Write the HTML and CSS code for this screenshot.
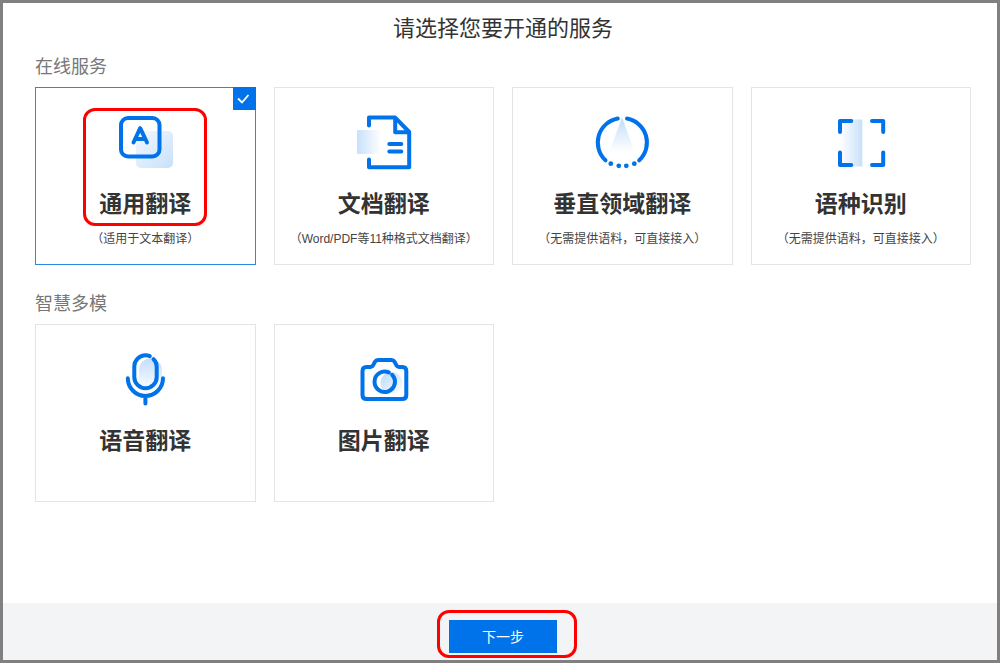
FILE: index.html
```html
<!DOCTYPE html>
<html lang="zh-CN">
<head>
<meta charset="utf-8">
<meta name="viewport" content="width=device-width, initial-scale=1">
<title>请选择您要开通的服务</title>
<link rel="stylesheet" href="styles.css">
</head>
<body>
<form class="page">
  <main class="content">
    <h1 class="page-title">请选择您要开通的服务</h1>

    <section class="group">
      <h2 class="group-title">在线服务</h2>
      <div class="cards">
        <label class="card card-selected">
          <input class="card-check" type="checkbox" name="service" value="text" checked>
          <svg class="tick" viewBox="0 0 23 22" aria-hidden="true"><path d="M6 10.500l4 4 6.500-7.500"/></svg>
          <span class="card-main marked">
            <svg class="icon" viewBox="0 0 60 60" aria-hidden="true">
              <defs><linearGradient id="g1" x1="0" y1="0" x2="1" y2="1"><stop offset="0" stop-color="#f4f9ff"/><stop offset="1" stop-color="#c8e0fb"/></linearGradient></defs>
              <rect x="21" y="18" width="37" height="37" rx="5" fill="url(#g1)"/>
              <rect class="line" x="6" y="5" width="38.500" height="38.500" rx="7"/>
              <path class="line" d="M18.500 29.500L25.200 15.200L32 29.500M21 26H29.500"/>
            </svg>
            <span class="card-title">通用翻译</span>
          </span>
          <span class="card-note">（适用于文本翻译）</span>
        </label>

        <label class="card">
          <input class="card-check" type="checkbox" name="service" value="document">
          <svg class="tick" viewBox="0 0 23 22" aria-hidden="true"><path d="M6 10.500l4 4 6.500-7.500"/></svg>
          <span class="card-main">
            <svg class="icon" viewBox="0 0 60 60" aria-hidden="true">
              <defs><linearGradient id="g2"><stop offset="0" stop-color="#c8e0fb"/><stop offset="1" stop-color="#fff"/></linearGradient></defs>
              <rect x="3" y="17" width="24" height="24" rx="1" fill="url(#g2)"/>
              <path class="line" d="M15 12.500V4.600H41.200L55.200 19V54.200H15V46.500M41.200 5V19.200H55M35.300 31H47.300M35.300 38.500H47.300"/>
            </svg>
            <span class="card-title">文档翻译</span>
          </span>
          <span class="card-note">（Word/PDF等11种格式文档翻译）</span>
        </label>

        <label class="card">
          <input class="card-check" type="checkbox" name="service" value="domain">
          <svg class="tick" viewBox="0 0 23 22" aria-hidden="true"><path d="M6 10.500l4 4 6.500-7.500"/></svg>
          <span class="card-main">
            <svg class="icon" viewBox="0 0 60 60" aria-hidden="true">
              <defs><linearGradient id="g3" x1="0" y1="0" x2="0" y2="1"><stop offset="0" stop-color="#c0dcfb"/><stop offset="1" stop-color="#fff"/></linearGradient></defs>
              <path d="M30 4L42.500 39H17.500Z" fill="url(#g3)"/>
              <path class="line" d="M25.800 5.500A24.400 24.400 0 0 0 13.500 47.300M35 5.500A24.400 24.400 0 0 1 47.200 47.300"/>
              <g fill="#0073eb"><circle cx="18.800" cy="50.700" r="2.400"/><circle cx="26.800" cy="52.800" r="2.400"/><circle cx="34.300" cy="52.800" r="2.400"/><circle cx="42.300" cy="50.700" r="2.400"/></g>
            </svg>
            <span class="card-title">垂直领域翻译</span>
          </span>
          <span class="card-note">（无需提供语料，可直接接入）</span>
        </label>

        <label class="card">
          <input class="card-check" type="checkbox" name="service" value="detect">
          <svg class="tick" viewBox="0 0 23 22" aria-hidden="true"><path d="M6 10.500l4 4 6.500-7.500"/></svg>
          <span class="card-main">
            <svg class="icon" viewBox="0 0 60 60" aria-hidden="true">
              <defs><linearGradient id="g4"><stop offset="0" stop-color="#fff"/><stop offset="1" stop-color="#c8e0fb"/></linearGradient></defs>
              <rect x="9" y="6.500" width="22.300" height="47" fill="url(#g4)"/>
              <path class="line" d="M9 19V8H20.300M41 8H52.200V19M52.200 39.500V51.900H41M20.300 51.900H9V39.500"/>
            </svg>
            <span class="card-title">语种识别</span>
          </span>
          <span class="card-note">（无需提供语料，可直接接入）</span>
        </label>
      </div>
    </section>

    <section class="group">
      <h2 class="group-title">智慧多模</h2>
      <div class="cards">
        <label class="card">
          <input class="card-check" type="checkbox" name="service" value="speech">
          <svg class="tick" viewBox="0 0 23 22" aria-hidden="true"><path d="M6 10.500l4 4 6.500-7.500"/></svg>
          <span class="card-main">
            <svg class="icon" viewBox="0 0 60 60" aria-hidden="true">
              <defs><linearGradient id="g5" x1="0" y1="0" x2="0" y2="1"><stop offset="0" stop-color="#c3ddfb"/><stop offset="1" stop-color="#fff"/></linearGradient></defs>
              <rect x="24" y="8.500" width="23" height="32" rx="11.500" fill="url(#g5)"/>
              <path class="line" d="M34.800 6.100Q33 5.300 30.500 5.300A11.200 11.200 0 0 0 19.300 16.500V27A11.200 11.200 0 0 0 41.700 27V16.500Q41.700 12.500 38.500 9.200M12.800 28.300A17.600 17.600 0 0 0 48 28.300M30.400 46V53.600"/>
            </svg>
            <span class="card-title">语音翻译</span>
          </span>
        </label>

        <label class="card">
          <input class="card-check" type="checkbox" name="service" value="image">
          <svg class="tick" viewBox="0 0 23 22" aria-hidden="true"><path d="M6 10.500l4 4 6.500-7.500"/></svg>
          <span class="card-main">
            <svg class="icon" viewBox="0 0 60 60" aria-hidden="true">
              <defs><linearGradient id="g6" x1="0" y1="0" x2="1" y2="1"><stop offset="0" stop-color="#b8d8fa"/><stop offset="1" stop-color="#fff"/></linearGradient></defs>
              <circle cx="37.500" cy="33" r="11" fill="url(#g6)"/>
              <path class="line" d="M12.500 17H16.500Q18.300 17 19.200 15.200L21 11.700Q22 9.900 24 9.900H37.500Q39.500 9.900 40.500 11.700L42.300 15.200Q43.200 17 45 17H48.300Q52.300 17 52.300 21V44.900Q52.300 48.900 48.300 48.900H12.500Q8.500 48.900 8.500 44.900V21Q8.500 17 12.500 17Z"/>
              <path class="line" d="M34.800 22.400A10.200 10.200 0 1 0 38.200 24.800"/>
            </svg>
            <span class="card-title">图片翻译</span>
          </span>
        </label>
      </div>
    </section>
  </main>

  <footer class="footer">
    <span class="marked next-wrap"><button class="next" type="button">下一步</button></span>
  </footer>
</form>
</body>
</html>
```
FILE: styles.css
```css
* {
  box-sizing: border-box;
}

body {
  margin: 0;
  font-family: "Liberation Sans", "Noto Sans CJK SC", sans-serif;
  font-weight: 400;
  color: #333;
  background: #fff;
}

.page {
  display: flex;
  flex-direction: column;
  min-height: 100vh;
  border: 3px solid #808080;
}

.content {
  flex: 1;
  padding: 10px 26px 20px 32px;
}

.page-title {
  margin: 0 0 10px;
  font-size: 22px;
  line-height: 32px;
  font-weight: 400;
  text-align: center;
}

.group + .group {
  margin-top: 27px;
}

.group-title {
  margin: 0 0 8px;
  font-size: 18px;
  line-height: 24px;
  font-weight: 400;
  color: #777;
}

.cards {
  display: grid;
  grid-template-columns: repeat(4, 1fr);
  gap: 18px;
}

.card {
  position: relative;
  display: flex;
  flex-direction: column;
  align-items: center;
  min-height: 178px;
  padding: 25px 8px 13px;
  border: 1px solid #e4e4e4;
  cursor: pointer;
}

.card-selected {
  border-color: #2a88e6;
}

.card-check {
  position: absolute;
  top: -1px;
  right: -1px;
  width: 23px;
  height: 23px;
  margin: 0;
  appearance: none;
  cursor: pointer;
}

.card-check:checked {
  background: #0073eb;
}

.tick {
  position: absolute;
  top: 0;
  right: 0;
  width: 23px;
  height: 22px;
  fill: none;
  stroke: #fff;
  stroke-width: 1.8;
  visibility: hidden;
  pointer-events: none;
}

.card-check:checked + .tick {
  visibility: visible;
}

.card-main {
  display: flex;
  flex-direction: column;
  align-items: center;
}

.icon {
  display: block;
  width: 60px;
  height: 60px;
}

.line {
  fill: none;
  stroke: #0073eb;
  stroke-width: 4;
  stroke-linecap: round;
  stroke-linejoin: round;
}

.card-title {
  margin-top: 15px;
  font-size: 23px;
  line-height: 32px;
  font-weight: 700;
}

.card-note {
  margin-top: 9px;
  font-size: 12px;
  line-height: 20px;
  color: #444;
  white-space: nowrap;
}

/* Red outline that draws attention to a step */
.marked {
  position: relative;
}

.marked::after {
  content: "";
  position: absolute;
  inset: -5px -16px -6px;
  border: 3px solid #f00;
  border-radius: 12px;
  pointer-events: none;
}

.footer {
  display: flex;
  justify-content: center;
  padding: 17px 26px 7px 32px;
  background: #f3f4f6;
}

.next-wrap::after {
  inset: -10px -20px -5px -12px;
}

.next {
  display: block;
  width: 108px;
  height: 33px;
  padding: 0 0 2px;
  border: 0;
  background: #0073eb;
  color: #fff;
  font: inherit;
  font-size: 14px;
  cursor: pointer;
}
```
